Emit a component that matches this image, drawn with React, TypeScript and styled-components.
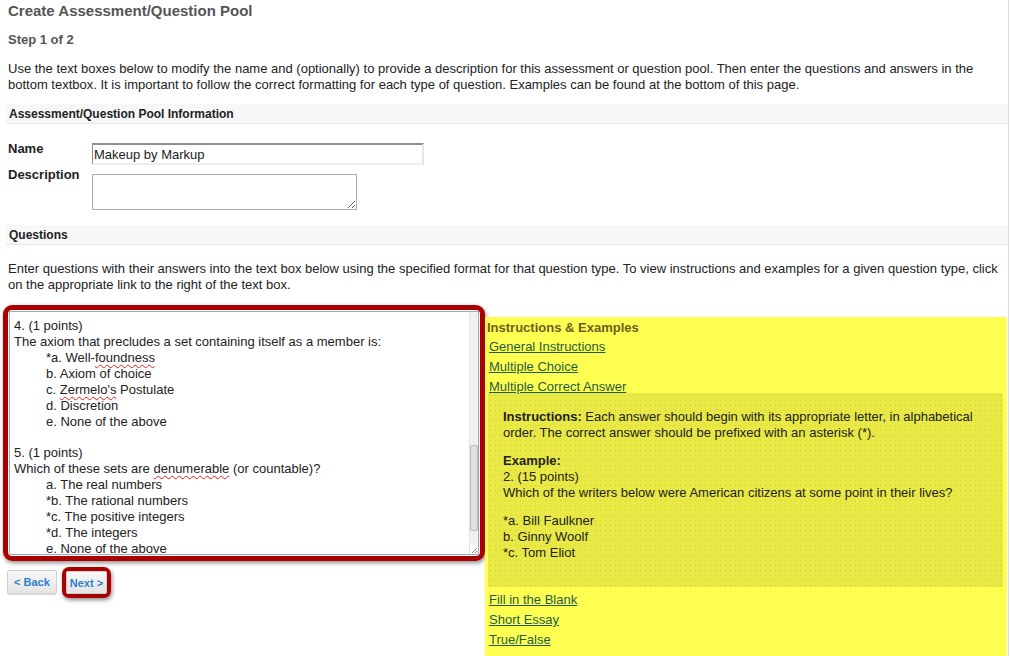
import React from "react";
import styled, { createGlobalStyle } from "styled-components";

const GlobalStyle = createGlobalStyle`
  html, body { margin: 0; padding: 0; background: #fff; overflow: hidden; }
  body { font-family: "Liberation Sans", Arial, sans-serif; color: #222; }
`;

const Page = styled.div`
  width: 1009px;
  height: 656px;
  box-sizing: border-box;
  border-right: 1px solid #d9d9d9;
  padding: 2px 0 0 3px;
  overflow: hidden;
`;

const Title = styled.h1`
  margin: 0 0 0 5px;
  font-size: 15px;
  line-height: 17px;
  font-weight: bold;
  color: #555;
`;

const Step = styled.h2`
  margin: 13px 0 0 5px;
  font-size: 13px;
  line-height: 16px;
  font-weight: bold;
  color: #555;
`;

const Paragraph = styled.p<{ $top: number }>`
  margin: ${(p) => p.$top}px 4px 0 5px;
  font-size: 13px;
  line-height: 16px;
  color: #222;
`;

const SectionHeader = styled.h3<{ $top: number }>`
  margin: ${(p) => p.$top}px 0 0 3px;
  height: 20px;
  box-sizing: border-box;
  padding: 1px 0 0 3px;
  line-height: 18px;
  font-size: 12px;
  font-weight: bold;
  color: #222;
  background: #f7f7f7;
  border-bottom: 1px solid #e6e6e6;
`;

const FormRow = styled.div<{ $top: number }>`
  display: grid;
  grid-template-columns: 84px auto;
  align-items: start;
  margin: ${(p) => p.$top}px 0 0 5px;
`;

const Label = styled.label`
  font-size: 13px;
  line-height: 16px;
  font-weight: bold;
  color: #222;
`;

const NameInput = styled.input`
  margin-top: 2px;
  width: 332px;
  height: 22px;
  box-sizing: border-box;
  padding: 0 1px;
  font-family: "Liberation Sans", Arial, sans-serif;
  font-size: 13px;
  color: #222;
  border-style: solid;
  border-width: 2px 2px 2px 1px;
  border-color: #8e8e8e #e6e6e6 #eeeeee #8e8e8e;
  outline: none;
`;

const DescArea = styled.textarea`
  margin-top: 7px;
  width: 265px;
  height: 36px;
  box-sizing: border-box;
  border: 1px solid #ababab;
  padding: 2px;
  font-family: "Liberation Sans", Arial, sans-serif;
  font-size: 13px;
  resize: both;
  outline: none;
`;

const QuestionsRow = styled.div`
  display: flex;
  align-items: flex-start;
  margin-top: 12px;
`;

const LeftColumn = styled.div`
  width: 482px;
  flex: none;
`;

const Annotation = styled.div<{ $w: number; $r: number }>`
  border: ${(p) => p.$w}px solid #a90000;
  border-radius: ${(p) => p.$r}px;
  box-shadow: 1px 2px 4px rgba(0, 0, 0, 0.45);
  box-sizing: border-box;
`;

const QuestionBox = styled.div`
  margin: 1px;
  height: 244px;
  box-sizing: border-box;
  border: 1px solid #a9a9a9;
  display: flex;
  background: #fff;
  overflow: hidden;
`;

const QuestionText = styled.div`
  flex: 1;
  padding: 6px 4px 0;
  font-size: 13px;
  line-height: 16px;
  color: #222;
  white-space: nowrap;
  overflow: hidden;
`;

const Line = styled.div<{ $indent?: boolean; $blank?: boolean }>`
  padding-left: ${(p) => (p.$indent ? 32 : 0)}px;
  height: ${(p) => (p.$blank ? 15 : 16)}px;
`;

const Misspelled = styled.span`
  text-decoration: underline wavy #e02020;
  text-decoration-thickness: 1px;
  text-underline-offset: 2px;
`;

const ScrollTrack = styled.div`
  width: 8px;
  flex: none;
  display: flex;
  flex-direction: column;
  background: #f1f1f1;
  border-left: 1px solid #e2e2e2;
`;

const ScrollThumb = styled.div`
  margin-top: 133px;
  height: 86px;
  box-sizing: border-box;
  background: #e0e0e0;
  border: 1px solid #bcbcbc;
  border-radius: 2px;
`;

const Grip = styled.div`
  margin-top: auto;
  height: 9px;
  display: flex;
  justify-content: flex-end;
  align-items: flex-end;
  background: #fff;
`;

const ButtonRow = styled.div`
  display: flex;
  align-items: flex-start;
  margin-top: 6px;
`;

const NavButton = styled.button<{ $h: number; $pad: number }>`
  height: ${(p) => p.$h}px;
  box-sizing: border-box;
  padding: 0 ${(p) => p.$pad}px;
  font-family: "Liberation Sans", Arial, sans-serif;
  font-size: 11px;
  font-weight: bold;
  color: #2f7fcc;
  background: linear-gradient(#f8f8f8, #e4e4e4);
  border: 1px solid #cfcfcf;
  border-radius: 2px;
  box-shadow: 0 1px 1px rgba(0, 0, 0, 0.15);
  display: block;
`;

const BackWrap = styled.div`
  margin: 3px 0 0 4px;
`;

const NextWrap = styled.div`
  margin-left: 5px;
`;

const Panel = styled.div`
  flex: 1;
  margin: 12px 1px 0 0;
  padding: 3px 0 12px;
  background: #ffff52;
  min-height: 360px;
`;

const PanelHeading = styled.div`
  padding-left: 2px;
  font-size: 13px;
  line-height: 16px;
  font-weight: bold;
  color: #6b6020;
`;

const PanelLink = styled.a<{ $top: number }>`
  display: block;
  width: max-content;
  margin: ${(p) => p.$top}px 0 0 4px;
  font-size: 13px;
  line-height: 16px;
  color: #1f5d44;
  text-decoration: underline;
  cursor: pointer;
`;

const ExampleBox = styled.div`
  margin: -2px 4px 0 3px;
  padding: 16px 15px 14px;
  background-color: #e9e946;
  background-image: radial-gradient(circle, #cdcd3a 0.6px, transparent 0.9px);
  background-size: 5px 5px;
  font-size: 13px;
  line-height: 16px;
  color: #222;
`;

const BoxPara = styled.p`
  margin: 0 0 12px;
`;

const GripIcon = () => (
  <svg width="8" height="8" viewBox="0 0 8 8">
    <path d="M7 2 L2 7 M7 5 L5 7" stroke="#8a8a8a" strokeWidth="1" />
  </svg>
);

export default function App() {
  return (
    <>
      <GlobalStyle />
      <Page>
        <Title>Create Assessment/Question Pool</Title>
        <Step>Step 1 of 2</Step>
        <Paragraph $top={13}>
          Use the text boxes below to modify the name and (optionally) to provide a description for this
          assessment or question pool. Then enter the questions and answers in the bottom textbox. It is
          important to follow the correct formatting for each type of question. Examples can be found at the
          bottom of this page.
        </Paragraph>
        <SectionHeader $top={11}>Assessment/Question Pool Information</SectionHeader>
        <FormRow $top={17}>
          <Label>Name</Label>
          <NameInput defaultValue="Makeup by Markup" />
        </FormRow>
        <FormRow $top={2}>
          <Label>Description</Label>
          <DescArea />
        </FormRow>
        <SectionHeader $top={15}>Questions</SectionHeader>
        <Paragraph $top={16}>
          Enter questions with their answers into the text box below using the specified format for that question
          type. To view instructions and examples for a given question type, click on the appropriate link to the
          right of the text box.
        </Paragraph>
        <QuestionsRow>
          <LeftColumn>
            <Annotation $w={5} $r={9}>
              <QuestionBox>
                <QuestionText>
                  <Line>4. (1 points)</Line>
                  <Line>The axiom that precludes a set containing itself as a member is:</Line>
                  <Line $indent>
                    *a. Well-<Misspelled>foundness</Misspelled>
                  </Line>
                  <Line $indent>b. Axiom of choice</Line>
                  <Line $indent>
                    c. <Misspelled>Zermelo's</Misspelled> Postulate
                  </Line>
                  <Line $indent>d. Discretion</Line>
                  <Line $indent>e. None of the above</Line>
                  <Line $blank />
                  <Line>5. (1 points)</Line>
                  <Line>
                    Which of these sets are <Misspelled>denumerable</Misspelled> (or countable)?
                  </Line>
                  <Line $indent>a. The real numbers</Line>
                  <Line $indent>*b. The rational numbers</Line>
                  <Line $indent>*c. The positive integers</Line>
                  <Line $indent>*d. The integers</Line>
                  <Line $indent>e. None of the above</Line>
                </QuestionText>
                <ScrollTrack>
                  <ScrollThumb />
                  <Grip>
                    <GripIcon />
                  </Grip>
                </ScrollTrack>
              </QuestionBox>
            </Annotation>
            <ButtonRow>
              <BackWrap>
                <NavButton $h={24} $pad={6}>&lt; Back</NavButton>
              </BackWrap>
              <NextWrap>
                <Annotation $w={4} $r={7}>
                  <NavButton $h={23} $pad={3}>Next &gt;</NavButton>
                </Annotation>
              </NextWrap>
            </ButtonRow>
          </LeftColumn>
          <Panel>
            <PanelHeading>Instructions &amp; Examples</PanelHeading>
            <PanelLink $top={3}>General Instructions</PanelLink>
            <PanelLink $top={4}>Multiple Choice</PanelLink>
            <PanelLink $top={4}>Multiple Correct Answer</PanelLink>
            <ExampleBox>
              <BoxPara>
                <b>Instructions:</b> Each answer should begin with its appropriate letter, in alphabetical order.
                The correct answer should be prefixed with an asterisk (*).
              </BoxPara>
              <BoxPara>
                <b>Example:</b>
                <br />
                2. (15 points)
                <br />
                Which of the writers below were American citizens at some point in their lives?
              </BoxPara>
              <BoxPara>
                *a. Bill Faulkner
                <br />
                b. Ginny Woolf
                <br />
                *c. Tom Eliot
              </BoxPara>
            </ExampleBox>
            <PanelLink $top={5}>Fill in the Blank</PanelLink>
            <PanelLink $top={4}>Short Essay</PanelLink>
            <PanelLink $top={4}>True/False</PanelLink>
          </Panel>
        </QuestionsRow>
      </Page>
    </>
  );
}
